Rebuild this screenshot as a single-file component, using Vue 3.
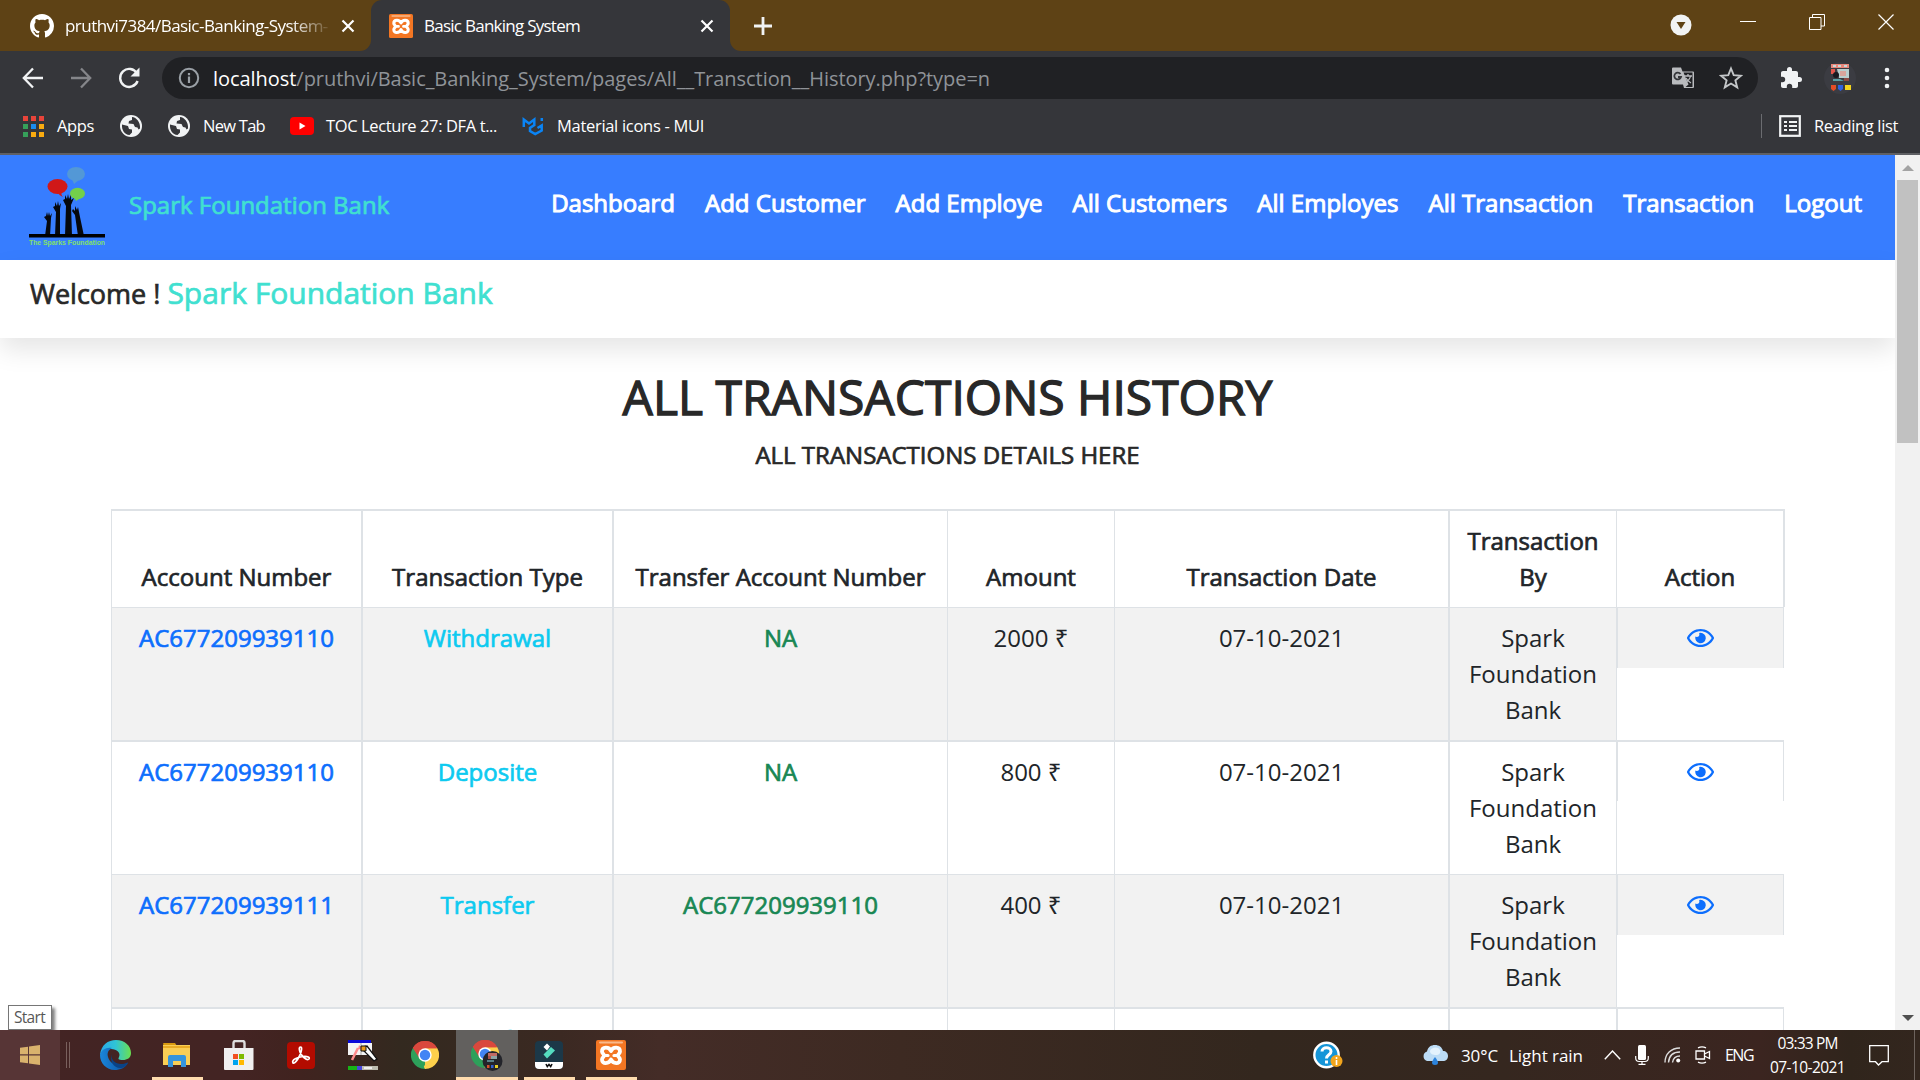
<script setup>
const navItems = ['Dashboard', 'Add Customer', 'Add Employe', 'All Customers', 'All Employes', 'All Transaction', 'Transaction', 'Logout']
const columns = ['Account Number', 'Transaction Type', 'Transfer Account Number', 'Amount', 'Transaction Date', 'Transaction By', 'Action']
const rows = [
  { account: 'AC677209939110', type: 'Withdrawal', transfer: 'NA', amount: '2000 ₹' },
  { account: 'AC677209939110', type: 'Deposite', transfer: 'NA', amount: '800 ₹' },
  { account: 'AC677209939111', type: 'Transfer', transfer: 'AC677209939110', amount: '400 ₹' },
  { account: 'AC677209939111', type: 'Transfer', transfer: 'AC677209939110', amount: '400 ₹' }
]

// Spreads a label's letters so that it fills the given width in pixels.
const vFit = {
  mounted(el, binding) {
    const natural = el.getBoundingClientRect().width
    el.style.letterSpacing = (binding.value - natural) / el.textContent.trim().length + 'px'
  }
}
</script>

<template>
  <div class="screen">
    <svg class="defs" width="0" height="0" aria-hidden="true">
      <defs>
        <symbol id="xampp" viewBox="0 0 30 30">
          <rect width="30" height="30" rx="2" fill="#f37623" />
          <rect x="3" y="1.500" width="24" height="2" rx="1" fill="#f9b98c" />
          <path d="M15 11C13 6.500 6 6.500 6 11.500C6 13.500 8 14 8 15.500C8 17 6 17.500 6 19.500C6 24.500 13 24 15 19.500C17 24 24 24.500 24 19.500C24 17.500 22 17 22 15.500C22 14 24 13.500 24 11.500C24 6.500 17 6.500 15 11Z" stroke="#fff" stroke-width="3.800" stroke-linejoin="round" fill="none" />
          <path d="M8.500 15.500h3.500M21.500 15.500H18" stroke="#fff" stroke-width="3.200" stroke-linecap="round" />
        </symbol>
        <symbol id="chrome" viewBox="0 0 48 48">
          <path d="M24 24 3.200 12A24 24 0 0 1 44.800 12z" fill="#e0453a" />
          <path d="M24 24 44.800 12A24 24 0 0 1 24 48z" fill="#fdd04b" />
          <path d="M24 24v0L24 48A24 24 0 0 1 3.200 12z" fill="#2da05a" />
          <path d="M24 12.500h21L34 30 24 48l-2-4 8-14z" fill="#fdd04b" />
          <path d="M24 12.500h21A24 24 0 0 0 3.200 12l10 16z" fill="#d9483d" />
          <circle cx="24" cy="24" r="11.500" fill="#fff" />
          <circle cx="24" cy="24" r="9" fill="#4285f4" />
        </symbol>
        <symbol id="globe" viewBox="0 0 24 24">
          <circle cx="12" cy="12" r="11" fill="#f1f3f4" />
          <path d="M3 10.500 9 12l1 3 3 .500v3l-2.500 2.500C5.500 20.500 2.500 16 3 10.500zM13 3v3l-3 1-.500 2.500 5 .500 1.500 3 2.500.500 1 2 1.500-1C21.500 8 17.500 3.500 13 3z" fill="#35363a" />
        </symbol>
      </defs>
    </svg>

    <!-- Browser tabs -->
    <div class="tabs">
      <div class="tab idle">
        <svg width="24" height="24" viewBox="0 0 16 16"><path fill="#fff" d="M8 0C3.580 0 0 3.580 0 8c0 3.540 2.290 6.530 5.470 7.590.400.070.550-.170.550-.380 0-.190-.010-.820-.010-1.490-2.010.370-2.530-.490-2.690-.940-.090-.230-.480-.940-.820-1.130-.280-.150-.680-.520-.010-.530.630-.010 1.080.580 1.230.820.720 1.210 1.870.870 2.330.660.070-.520.280-.870.510-1.070-1.780-.200-3.640-.890-3.640-3.950 0-.870.310-1.590.820-2.150-.080-.200-.360-1.020.080-2.120 0 0 .670-.210 2.200.820.640-.180 1.320-.270 2-.270s1.360.090 2 .270c1.530-1.040 2.200-.820 2.200-.820.440 1.100.160 1.920.080 2.120.510.560.820 1.270.820 2.150 0 3.070-1.870 3.750-3.650 3.950.290.250.540.730.540 1.480 0 1.070-.010 1.930-.010 2.200 0 .210.150.460.550.380A8.010 8.010 0 0 0 16 8c0-4.420-3.580-8-8-8z" /></svg>
        <div class="tab-title faded"><span v-fit="267">pruthvi7384/Basic-Banking-System-I</span></div>
        <svg width="14" height="14" viewBox="0 0 14 14"><path d="M1.500 1.500l11 11M12.500 1.500l-11 11" stroke="#fff" stroke-width="2.200" /></svg>
      </div>
      <div class="tab active">
        <svg width="24" height="24"><use href="#xampp" /></svg>
        <div class="tab-title"><span v-fit="156">Basic Banking System</span></div>
        <svg width="14" height="14" viewBox="0 0 14 14"><path d="M1.500 1.500l11 11M12.500 1.500l-11 11" stroke="#fff" stroke-width="2.200" /></svg>
      </div>
      <div class="strip">
        <svg class="plus" width="18" height="18" viewBox="0 0 18 18"><path d="M9 0v18M0 9h18" stroke="#f1f3f4" stroke-width="2.800" /></svg>
        <svg class="search-tabs" width="22" height="22" viewBox="0 0 22 22"><circle cx="11" cy="11" r="10.500" fill="#f1f3f4" /><path d="M6.500 8h9L11 15z" fill="#5e4215" /></svg>
        <svg class="win" width="16" height="16" viewBox="0 0 16 16"><path d="M0 7.500h16" stroke="#fff" /></svg>
        <svg class="win" width="16" height="16" viewBox="0 0 16 16"><path d="M.5 3.500h11.500v12H.5zM3.500 3.500v-3h12v11.500H12" stroke="#fff" fill="none" /></svg>
        <svg class="win" width="16" height="16" viewBox="0 0 16 16"><path d="M.5.5l15 15M15.500.5l-15 15" stroke="#fff" stroke-width="1.200" /></svg>
      </div>
    </div>

    <!-- Address bar -->
    <div class="toolbar">
      <svg class="tool" width="24" height="24" viewBox="0 0 24 24"><path d="M22 12H3.500M12 2.500 2.800 12l9.200 9.500" stroke="#f1f3f4" stroke-width="2.300" fill="none" /></svg>
      <svg class="tool" width="24" height="24" viewBox="0 0 24 24"><path d="M2 12h18.500M12 2.500l9.200 9.500-9.200 9.500" stroke="#85868a" stroke-width="2.300" fill="none" /></svg>
      <svg class="tool" width="24" height="24" viewBox="0 0 24 24"><path d="M20 7.500A9 9 0 1 0 20.600 15" stroke="#f1f3f4" stroke-width="2.400" fill="none" /><path d="M22.500 1.500v9h-9z" fill="#f1f3f4" /></svg>
      <div class="address">
        <svg width="22" height="22" viewBox="0 0 22 22"><circle cx="11" cy="11" r="9.200" stroke="#9aa0a6" stroke-width="2" fill="none" /><path d="M11 9.500v6.500M11 6v2.200" stroke="#9aa0a6" stroke-width="2.200" /></svg>
        <span v-fit="777" class="url"><b>localhost</b>/pruthvi/Basic_Banking_System/pages/All__Transction__History.php?type=n</span>
        <svg class="translate" width="24" height="24" viewBox="0 0 24 24">
          <path d="M2 1.500h8l1.500 4h10.500a1 1 0 0 1 1 1V21a1 1 0 0 1-1 1h-9l-1-3.500H2a1 1 0 0 1-1-1v-15a1 1 0 0 1 1-1z" fill="#b9bbbe" />
          <path d="M12.500 6.500h9v14.500h-7l3-2.500z" fill="#202124" />
          <path d="M13 10h8M17 8v2M19.500 10c-.5 3-2.500 5-5 6.500M15 12c1 2 3 4 5 5" stroke="#b9bbbe" stroke-width="1.300" fill="none" />
          <path d="M9.500 8A3.400 3.400 0 1 0 10 11H7" stroke="#35363a" stroke-width="1.800" fill="none" />
        </svg>
        <svg class="star" width="24" height="24" viewBox="0 0 24 24"><path d="M12 2.500l2.700 6.700 7.200.5-5.500 4.700 1.800 7-6.200-3.900-6.200 3.900 1.800-7-5.500-4.700 7.200-.5z" stroke="#c4c7c9" stroke-width="1.900" fill="none" /></svg>
      </div>
      <svg class="puzzle" width="24" height="24" viewBox="0 0 24 24"><path fill="#f1f3f4" d="M20.500 11H19V7c0-1.100-.9-2-2-2h-4V3.500a2.500 2.500 0 0 0-5 0V5H4c-1.100 0-2 .9-2 2v3.800h1.500a2.700 2.700 0 0 1 0 5.400H2V20c0 1.100.9 2 2 2h3.800v-1.500a2.700 2.700 0 0 1 5.400 0V22H17c1.100 0 2-.9 2-2v-4h1.500a2.500 2.500 0 0 0 0-5z" /></svg>
      <svg class="avatar" width="32" height="32" viewBox="0 0 32 32">
        <circle cx="16" cy="16" r="16" fill="#3b3c42" />
        <path d="M7 2h18v4H7z" fill="#e8877a" /><path d="M9 3h3v2H9zM14 3h3v2h-3zM20 3h3v2h-3z" fill="#c8d8d8" />
        <path d="M13 7h12v9H15z" fill="#b9cfce" /><path d="M16 9h6v5h-6z" fill="#d9a59c" />
        <path d="M7 7h4v5H7z" fill="#e2574c" /><circle cx="12" cy="13" r="3" fill="#191a20" /><path d="M9 17h7l4 2H9z" fill="#5aa0a4" /><path d="M20 16h5v3h-5z" fill="#8a4a44" />
        <path d="M7 23h5v4l-2.500 2L7 27z" fill="#e44d26" /><path d="M14 23h5v4l-2.500 2L14 27z" fill="#2f62e0" /><path d="M21 23h6v5h-6z" fill="#f3d51c" />
      </svg>
      <svg class="dots" width="6" height="22" viewBox="0 0 6 22"><circle cx="3" cy="3" r="2.300" fill="#f1f3f4" /><circle cx="3" cy="11" r="2.300" fill="#f1f3f4" /><circle cx="3" cy="19" r="2.300" fill="#f1f3f4" /></svg>
    </div>

    <!-- Bookmarks -->
    <div class="bookmarks">
      <svg width="21" height="21" viewBox="0 0 21 21">
        <path d="M0 0h5v5H0zM8 0h5v5H8zM16 0h5v5h-5z" fill="#e8443a" /><path d="M0 8h5v5H0zM0 16h5v5H0z" fill="#36a05a" /><path d="M8 8h5v5H8z" fill="#1a8cf0" /><path d="M16 8h5v5h-5zM8 16h5v5H8zM16 16h5v5h-5z" fill="#f9ab10" />
      </svg>
      <span class="mark apps"><span v-fit="37">Apps</span></span>
      <svg class="lone" width="24" height="24"><use href="#globe" /></svg>
      <svg width="24" height="24"><use href="#globe" /></svg>
      <span class="mark newtab"><span v-fit="62">New Tab</span></span>
      <svg width="24" height="18" viewBox="0 0 24 18"><rect width="24" height="18" rx="4" fill="#f00" /><path d="M9.500 5.500v7L15.500 9z" fill="#fff" /></svg>
      <span class="mark toc"><span v-fit="171">TOC Lecture 27: DFA t...</span></span>
      <svg width="22" height="20" viewBox="0 0 22 20"><path d="M1.800 11V3.500L7 7.500 12.300 3.500V9L8 12v3l5.200 3 6.500-3.500V9.500L15.500 12M19.800 2v3" stroke="#0a84f5" stroke-width="2.500" fill="none" /></svg>
      <span class="mark mui"><span v-fit="147">Material icons - MUI</span></span>
      <i class="divider"></i>
      <svg width="22" height="22" viewBox="0 0 22 22"><rect x="1.200" y="1.200" width="19.600" height="19.600" fill="none" stroke="#f1f3f4" stroke-width="2.200" /><path d="M5 7h3M5 11h3M5 15h3M10 7h8M10 11h8M10 15h8" stroke="#f1f3f4" stroke-width="2.200" /></svg>
      <span class="mark reading"><span v-fit="84">Reading list</span></span>
    </div>

    <!-- Page -->
    <div class="viewport">
      <main class="page">
        <header class="navbar">
          <svg class="logo" width="76" height="82" viewBox="0 0 76 82">
            <ellipse cx="47" cy="8" rx="9" ry="7" fill="#5398d6" /><path d="M43 13l2 5 6-5z" fill="#5398d6" />
            <ellipse cx="28.500" cy="20.500" rx="10" ry="7.500" fill="#d01818" /><path d="M28 26c2 2 3 4 6 5-2-2-2-4-1-6z" fill="#d01818" />
            <ellipse cx="48.500" cy="27.500" rx="7.500" ry="5.800" fill="#73d04a" /><path d="M45 31l2 4 6-4z" fill="#73d04a" />
            <path d="M16 70l2-15-3-4 2-1 1-4 1 4 1-4 1 4 2-3-1 5-1 18zM26 70l1-24-3-5 2-1v-4l2 4 1-5 1 5 2-3-1 6v27zM36 70l1-30-3-6 2-1 0-4 2 4 1-5 1 5 2-4v5l3-2-3 7 1 31zM49 70l-3-21-3-4 1-2 2 2v-5l2 4 1-3 1 5 1 5 4 19z" fill="#06080d" />
            <path d="M0 68h76v3.500H0z" fill="#000" />
            <text x="0" y="79" textLength="76" lengthAdjust="spacingAndGlyphs" font-size="7.500" font-weight="700" font-family="Liberation Sans, sans-serif" fill="#82e06c">The Sparks Foundation</text>
          </svg>
          <span class="brand strong">Spark Foundation Bank</span>
          <nav class="menu"><a v-for="item in navItems" :key="item">{{ item }}</a></nav>
        </header>
        <section class="welcome strong">Welcome ! <span>Spark Foundation Bank</span></section>
        <h2>ALL TRANSACTIONS HISTORY</h2>
        <h5>ALL TRANSACTIONS DETAILS HERE</h5>
        <div class="table">
          <div class="row head strong">
            <div v-for="c in columns" :key="c" class="cell">{{ c }}</div>
          </div>
          <div v-for="(r, i) in rows" :key="i" class="row">
            <div class="cell account strong">{{ r.account }}</div>
            <div class="cell type strong">{{ r.type }}</div>
            <div class="cell transfer strong">{{ r.transfer }}</div>
            <div class="cell">{{ r.amount }}</div>
            <div class="cell">07-10-2021</div>
            <div class="cell">Spark Foundation Bank</div>
            <div class="rest">
              <div class="cell action">
                <svg width="27" height="24" viewBox="0 0 576 512"><path fill="#0d6efd" d="M288 144a110.940 110.940 0 0 0-31.240 5 55.400 55.400 0 0 1 7.240 27 56 56 0 0 1-56 56 55.400 55.400 0 0 1-27-7.240A111.710 111.710 0 1 0 288 144zm284.520 97.400C518.290 135.590 410.930 64 288 64S57.680 135.640 3.480 241.410a32.350 32.350 0 0 0 0 29.190C57.710 376.410 165.070 448 288 448s230.320-71.640 284.520-177.410a32.350 32.350 0 0 0 0-29.190zM288 400c-98.650 0-189.090-55-237.930-144C98.910 167 189.340 112 288 112s189.090 55 237.930 144C477.100 345 386.660 400 288 400z" /></svg>
              </div>
            </div>
          </div>
        </div>
      </main>
      <div class="scrollbar">
        <svg width="12" height="6" viewBox="0 0 12 6"><path d="M0 6 6 0l6 6z" fill="#a3a3a3" /></svg>
        <div class="thumb"></div>
        <svg class="down" width="12" height="6" viewBox="0 0 12 6"><path d="M0 0l6 6 6-6z" fill="#505050" /></svg>
      </div>
    </div>

    <div class="tooltip"><span v-fit="31">Start</span></div>

    <!-- Taskbar -->
    <div class="taskbar">
      <div class="slot start"><svg width="20" height="20" viewBox="0 0 20 20"><path d="M0 2.800 8 1.700v7.600H0zM9 1.500 20 0v9.300H9zM0 10.500h8v7.800L0 17.200zM9 10.500h11V20L9 18.500z" fill="#d9b26d" /></svg></div>
      <div class="grip"></div>
      <div class="slot">
        <svg width="31" height="30" viewBox="0 0 31 30">
          <defs>
            <linearGradient id="edgeTop" x1="0" x2="1"><stop offset="0" stop-color="#2aa7e8" /><stop offset=".5" stop-color="#2fc4d6" /><stop offset="1" stop-color="#6be04f" /></linearGradient>
            <linearGradient id="edgeSide" x1="0" x2="1"><stop offset="0" stop-color="#1a86dc" /><stop offset="1" stop-color="#0b4f9c" /></linearGradient>
          </defs>
          <path d="M0 15C1 5 8 0 16 0c9 0 15 6 15 13 0 5-4 7-8 7-5 0-5-1-4-3 2-4-2-8-8-8-5 0-9 3-11 6z" fill="url(#edgeTop)" />
          <path d="M0 15c1-5 6-8 12-7-4 2-5 5-4 9 2 7 9 9 14 8l6-2c-3 5-8 7-13 7C6 30 0 23 0 15z" fill="url(#edgeSide)" />
          <path d="M12 14c-2 6 4 10 9 10 3 0 5-.500 7-2-2 5-5 6-8 6-6 0-11-7-8-14z" fill="#0a4386" />
        </svg>
      </div>
      <div class="slot open">
        <svg width="28" height="24" viewBox="0 0 28 24"><path d="M0 1a1 1 0 0 1 1-1h11l2 3H1z" fill="#d99a10" /><path d="M0 2h27v20H0z" fill="#f9ce55" /><path d="M0 3h27v2H0z" fill="#e9ac25" /><path d="M5 14q0-2 2-2h14q2 0 2 2v10h-5v-6h-8v6H5z" fill="#3494dc" /></svg>
      </div>
      <div class="slot">
        <svg width="30" height="30" viewBox="0 0 30 30"><path d="M9.500 8V3q0-2 2-2h7q2 0 2 2v5" stroke="#dedede" stroke-width="2.400" fill="none" /><path d="M0 8h29.500v21q0 1-1 1H1q-1 0-1-1z" fill="#f0f0f0" /><path d="M9 14h5v5H9z" fill="#f25022" /><path d="M15 14h5v5h-5z" fill="#7fba00" /><path d="M9 20h5v5H9z" fill="#00a4ef" /><path d="M15 20h5v5h-5z" fill="#ffb900" /></svg>
      </div>
      <div class="slot">
        <svg width="28" height="27" viewBox="0 0 28 27"><rect width="28" height="27" rx="4" fill="#b30b00" /><path d="M6 21c-2-3 5-6 10-6.500 5-.5 7 1 6 2.500-2 2-8-3-9-7-1-3-1-5 .5-5 2 0 1 5-1 9-2 4-5 8-6.500 7z" stroke="#fff" stroke-width="1.700" fill="none" /></svg>
      </div>
      <div class="slot">
        <svg width="30" height="30" viewBox="0 0 30 30"><path d="M0 3h24v12H0z" fill="#f4f4f4" /><path d="M0 0h23v3H0z" fill="#0a0ad8" /><path d="M13 3v12" stroke="#999" stroke-width=".8" /><path d="M4 20 10 8" stroke="#ff8c8c" stroke-width="2.500" /><path d="M11 5l5 5-6-1z" fill="#f88" /><path d="M15 7l4-1 10 13-3 2-10-10z" fill="#fff" stroke="#111" stroke-width="1.300" /><path d="M13 6h5v5h-5z" fill="#e89b1c" stroke="#111" /><path d="M0 26h9v4H0z" fill="#17b317" /><path d="M9 26h5v4H9z" fill="#4848d8" /><path d="M14 26h16v4H14z" fill="#bdbdb0" /><path d="M16 27h8v2h-8z" fill="#eee" /></svg>
      </div>
      <div class="slot"><svg width="28" height="28"><use href="#chrome" /></svg></div>
      <div class="slot open current">
        <svg width="34" height="32" viewBox="0 0 34 32"><use href="#chrome" width="28" height="28" x="1" y="1" /><circle cx="22.500" cy="22" r="10" fill="#23242a" /><path d="M18 14h9v3h-9z" fill="#c06a64" /><path d="M21 17h6v3h-6z" fill="#8aa2a4" /><path d="M18 17h3v3h-3z" fill="#a8504c" /><path d="M17 21h7v2h-7z" fill="#587f86" /><path d="M17 26h2.500v3H17z" fill="#d9502c" /><path d="M21 26h2.500v3H21z" fill="#345fd0" /><path d="M25 26h3v3h-3z" fill="#e8cf25" /></svg>
      </div>
      <div class="slot open">
        <svg width="28" height="28" viewBox="0 0 28 28"><rect width="28" height="28" rx="4" fill="#1c3848" /><path d="M8.500 13.500l7.500-7.500 4 3.500-8 8z" fill="#55dcc0" /><path d="M8.500 6 12 2.500l3 3L12 9.500z" fill="#fff" /><path d="M0 21h28v3q0 4-4 4H4q-4 0-4-4z" fill="#fff" /><path d="M11 23l1.300 2.500L14 23.500l1.700 2 1.300-2.500" stroke="#111" stroke-width="1.600" fill="none" /></svg>
      </div>
      <div class="slot open"><svg width="30" height="30"><use href="#xampp" /></svg></div>

      <svg class="help" width="30" height="28" viewBox="0 0 30 28"><circle cx="13.500" cy="14" r="12.200" fill="#1595d8" stroke="#fff" stroke-width="2.400" /><path d="M9 10.500c0-5 9-5 9 0 0 3.500-4.500 3-4.500 7M13.500 19.500v3" stroke="#fff" stroke-width="3" fill="none" /><circle cx="23.500" cy="20" r="6" fill="#f2a51d" /><path d="M23.500 16v2M23.500 19v5" stroke="#fff" stroke-width="1.600" /></svg>
      <svg class="weather" width="26" height="20" viewBox="0 0 26 20"><path d="M5 16a5 5 0 0 1 0-9.500C6 2 9 0 13 0c4 0 7 2 8 6 3 0 5 2 5 5s-2 5-5 5z" fill="#bcdcf6" /><path d="M8 6c1-4 8-5 10-1 1 3-1 5-4 5s-6-1-6-4z" fill="#e3f2fd" /><path d="M13 12q3 4 3 5.500a3 2.500 0 0 1-6 0Q10 16 13 12z" fill="#2c83dc" /></svg>
      <span class="tray temp"><span v-fit="37">30°C</span></span>
      <span class="tray rain"><span v-fit="74">Light rain</span></span>
      <svg class="chevron" width="17" height="10" viewBox="0 0 17 10"><path d="M.8 9.300 8.500 1l7.700 8.300" stroke="#fff" stroke-width="1.400" fill="none" /></svg>
      <svg class="mic" width="14" height="20" viewBox="0 0 14 20"><rect x="3" width="8" height="15" rx="1.500" fill="#fff" /><path d="M.7 11v2q0 3.500 3.500 3.500h5.600q3.500 0 3.500-3.500v-2M7 16.500V19M3.500 19.300h7" stroke="#fff" stroke-width="1.200" fill="none" /></svg>
      <svg class="wifi" width="17" height="16" viewBox="0 0 17 16"><path d="M1 15.500C1 7 7 1 16 1M4.500 15.500C5 9 9 5 16 5M8.500 15.500C9 12 11 9 16 9" stroke="#ddd" stroke-width="1.400" fill="none" /><circle cx="14.200" cy="13.500" r="2" fill="#fff" /></svg>
      <svg class="cam" width="16" height="18" viewBox="0 0 16 18"><path d="M1 5h8.500v8H1zM9.500 8 14.500 5.500v7L9.500 10M3 1.800q4-2 8 0M3 16.200q4 2 8 0" stroke="#fff" stroke-width="1.300" fill="none" /></svg>
      <span class="tray eng"><span v-fit="28">ENG</span></span>
      <div class="clock"><span v-fit="60">03:33 PM</span><span v-fit="75">07-10-2021</span></div>
      <svg class="note" width="20" height="21" viewBox="0 0 20 21"><path d="M.7.7h18.600v16H13L9.500 20 6.500 16.700H.7z" stroke="#fff" stroke-width="1.300" fill="none" /></svg>
      <i class="peek"></i>
    </div>
  </div>
</template>

<style>
body { margin: 0; overflow: hidden; }
</style>

<style scoped>
.screen { position: relative; width: 1920px; height: 1080px; overflow: hidden; background: #fff; font-family: "Open Sans", "Noto Sans", sans-serif; color: #212529; display: flex; flex-direction: column; }
.defs { position: absolute; }
svg { display: block; flex: none; }
span { white-space: nowrap; }

.tabs { display: flex; flex: none; height: 51px; background: linear-gradient(#5e4215 50%, #35363a 50%); font-size: 17px; color: #fff; }
.tab { display: flex; align-items: center; box-sizing: border-box; }
.idle { width: 371px; padding-left: 30px; background: #5e4215; border-bottom-right-radius: 11px; }
.active { width: 359px; padding: 0 16px 0 18px; background: #35363a; border-radius: 11px 11px 0 0; }
.tab-title { flex: 1; margin-left: 11px; line-height: 24px; overflow: hidden; }
.idle .tab-title { flex: none; width: 264px; margin-right: 12px; }
.faded { mask-image: linear-gradient(90deg, #000 225px, transparent 268px); }
.strip { flex: 1; display: flex; align-items: flex-start; background: #5e4215; border-bottom-left-radius: 11px; }
.plus { margin: 17px 0 0 24px; }
.search-tabs { margin: 14px 48px 0 auto; }
.win { margin: 14px 0 0; }
.win + .win { margin-left: 53px; }
.win:last-child { margin-right: 26px; }

.toolbar { display: flex; align-items: center; flex: none; height: 54px; padding-left: 21px; background: #35363a; }
.tool { margin-right: 24px; }
.address { display: flex; align-items: center; box-sizing: border-box; width: 1596px; height: 42px; margin-left: -3px; padding: 0 15px 0 16px; border-radius: 21px; background: #202124; }
.url { margin-left: 13px; font-size: 20px; color: #8f9398; }
.url b { font-weight: 400; color: #fff; }
.translate { margin-left: auto; }
.star { margin-left: 24px; }
.puzzle { margin-left: 21px; }
.avatar { margin-left: 21px; }
.dots { margin-left: 28px; }

.bookmarks { display: flex; align-items: center; flex: none; height: 48px; padding: 0 22px 6px 23px; box-sizing: border-box; background: #35363a; font-size: 16.500px; color: #fff; }
.mark { flex: none; margin-bottom: 2px; }
.apps { width: 62px; margin-left: 13px; }
.lone { margin-right: 24px; }
.newtab { width: 87px; margin-left: 12px; }
.toc { width: 196px; margin-left: 12px; }
.mui { margin-left: 13px; }
.divider { width: 1px; height: 24px; margin: 0 17px 0 auto; background: #6b6c70; }
.reading { margin-left: 13px; }

.viewport { display: flex; height: 875px; flex: none; overflow: hidden; border-top: 2px solid #5f6064; }
.page { width: 1895px; overflow: hidden; font-size: 24px; line-height: 36px; }
.strong { -webkit-text-stroke: .7px currentColor; }
.navbar { display: flex; align-items: center; box-sizing: border-box; height: 105px; padding: 0 33px 0 29px; background: #377dff; }
.logo { margin-top: -1px; }
.brand { margin: 0 auto 5px 24px; color: #40e0d0; }
.menu { display: flex; gap: 30px; margin-bottom: 10px; color: #fff; -webkit-text-stroke: 1px currentColor; }
.menu a { white-space: nowrap; }
.welcome { position: relative; height: 78px; box-sizing: border-box; padding: 12px 30px; font-size: 27px; line-height: 42px; background: #fff; box-shadow: 0 12px 24px rgba(0, 0, 0, .1); color: #282828; }
.welcome span { font-size: 30px; color: #40e0d0; }
h2, h5 { margin: 0; font-weight: 400; text-align: center; color: #282828; }
h2 { margin-top: 30px; font-size: 48px; line-height: 58px; -webkit-text-stroke: 1.300px currentColor; }
h5 { margin: 14px 0 40px; font-size: 24px; line-height: 29px; -webkit-text-stroke: .7px currentColor; }

.table { width: 1674px; margin-left: 111px; text-align: center; }
.row { display: grid; grid-template-columns: 250px 251px 335px 167px 334px 168px 169px; box-sizing: border-box; height: 133px; }
.row.head { height: 98px; border-top: 2px solid #dee2e6; }
.cell { box-sizing: border-box; padding: 12px; border-left: 1px solid #dee2e6; }
.head .cell { display: flex; align-items: flex-end; justify-content: center; padding: 11px 0 12px; }
.head .cell:nth-child(6) { padding: 11px 14px 12px; }
.head .cell:last-child { border-right: 2px solid #dee2e6; }
.cell:nth-child(2), .cell:nth-child(3), .cell:nth-child(6) { border-left-width: 2px; }
.row:nth-child(odd) .cell, .row:nth-child(even) .cell { border-top: 1px solid #dee2e6; }
.row.head .cell { border-top: 0; }
.row:nth-child(3), .row:nth-child(5) { height: 134px; }
.row:nth-child(odd):not(.head) .cell { border-top-width: 2px; }
.row:nth-child(even) .cell { background: #f2f2f2; }
.account { color: #0d6efd; }
.type { color: #0dcaf0; }
.transfer { color: #198754; }
.rest { border-left: 1px solid #dee2e6; }
.cell.action { display: flex; justify-content: center; width: 167px; height: 61px; padding: 18px 0 0; border-right: 1px solid #dee2e6; }

.scrollbar { width: 25px; display: flex; flex-direction: column; align-items: center; background: #f1f1f1; padding: 10px 0 9px; box-sizing: border-box; }
.thumb { width: 21px; height: 263px; margin-top: 9px; background: #c1c1c1; }
.down { margin-top: auto; }

.tooltip { position: absolute; left: 8px; top: 1005px; box-sizing: border-box; width: 44px; height: 25px; padding-left: 5px; border: 1px solid #767676; background: #fff; box-shadow: 3px 3px 3px rgba(0, 0, 0, .5); font-size: 15.500px; line-height: 23px; color: #575757; }

.taskbar { position: relative; display: flex; align-items: center; height: 50px; flex: none; background: linear-gradient(90deg, #432424 0, #432423 240px, #40231f 300px, #33291f 400px, #3b2922 560px, #442c27 660px, #3d2a22 900px, #33271e 1260px, #35271f 1500px, #3b2520 1760px, #30251c 1850px, #33261e 100%); color: #fff; font-size: 17px; }
.slot { display: flex; align-items: center; justify-content: center; flex: none; width: 62px; height: 50px; box-sizing: border-box; }
.start { width: 60px; background: #573536; }
.grip { width: 2px; height: 26px; margin: 0 14px 0 6px; border-left: 1px solid #79605d; border-right: 1px solid #79605d; }
.open { background: linear-gradient(#ffdcae, #ffdcae) center bottom / 51px 3px no-repeat; }
.current { background: linear-gradient(#ffdcae, #ffdcae) center bottom / 62px 3px no-repeat #62605e; }
.help { margin-left: auto; margin-right: 79px; }
.weather { margin-right: 13px; }
.temp { width: 48px; }
.rain { width: 95px; }
.chevron { margin-right: 14px; }
.mic { margin-right: 15px; }
.wifi { margin-right: 14px; }
.cam { margin-right: 14px; }
.eng { width: 45px; font-size: 16px; }
.clock { display: flex; flex-direction: column; align-items: center; width: 75px; font-size: 15.500px; line-height: 24px; }
.note { margin: 0 25px 0 24px; }
.peek { width: 1px; height: 50px; margin-right: 5px; background: #6d635d; }
</style>
